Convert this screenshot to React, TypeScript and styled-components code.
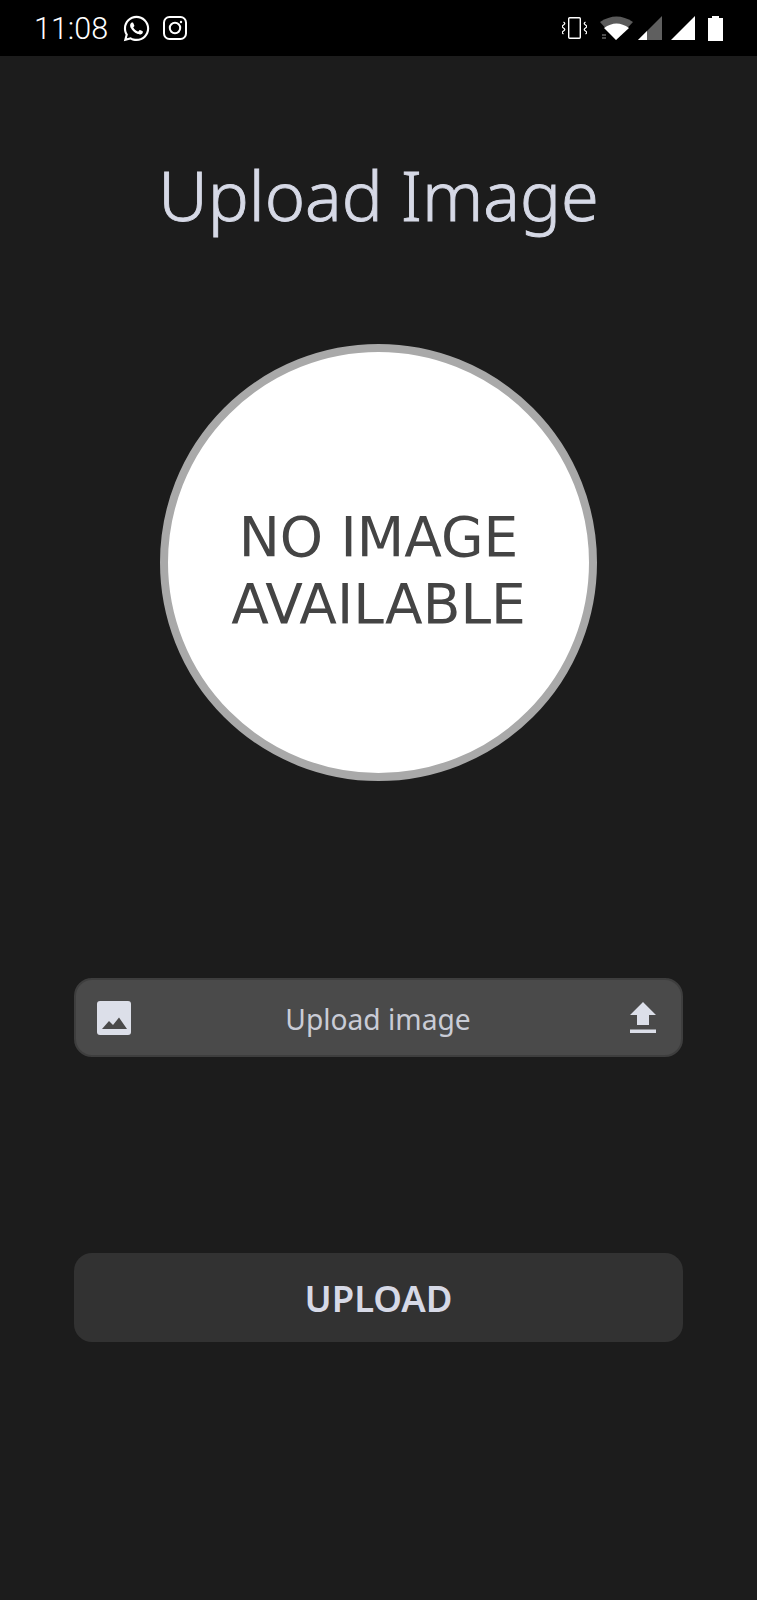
import styled, { createGlobalStyle } from 'styled-components'
import { FaWhatsapp } from 'react-icons/fa'

const GlobalStyle = createGlobalStyle`
  html, body {
    margin: 0;
    padding: 0;
    background: #1c1c1c;
  }
  * {
    box-sizing: border-box;
  }
`

function App() {
  return (
    <Screen>
      <GlobalStyle />
      <StatusBar>
        <StatusLeft>
          <Clock>11:08</Clock>
          <FaWhatsapp size={29} color="#fff" />
          <svg width="24" height="24" viewBox="0 0 24 24" fill="none" stroke="#fff" strokeWidth="2">
            <rect x="1" y="1" width="22" height="22" rx="5.5" />
            <circle cx="12" cy="12" r="5.2" />
            <circle cx="18" cy="6" r="1.2" fill="#fff" stroke="none" />
          </svg>
        </StatusLeft>
        <StatusRight>
          <StatusIcon $gap={0} width="25" height="24" viewBox="0 0 25 24" fill="none" stroke="#fff">
            <rect x="6.7" y="1.7" width="11.6" height="20.6" rx="1" strokeWidth="1.4" />
            <path d="M1.5 6q2.5 1.5 0 3t0 3q2.5 1.5 0 3t0 3M23.5 6q-2.5 1.5 0 3t0 3q-2.5 1.5 0 3t0 3" strokeWidth="1.3" />
          </StatusIcon>
          <StatusIcon $gap={13} width="33" height="24" viewBox="0 0 33 24">
            <path d="M0 6Q16.5 -5 33 6L16 24Z" fill="#5a5a5a" />
            <path d="M4 12Q16.5 3 29 12L16 24Z" fill="#fff" />
            <path d="M2 18h4v2h-4ZM2 21h4v2h-4Z" fill="#4a4a4a" />
          </StatusIcon>
          <StatusIcon $gap={5} width="24" height="24" viewBox="0 0 24 24">
            <path d="M24 0V24H0Z" fill="#5f5f5f" />
            <path d="M9 15V24H0Z" fill="#fff" />
          </StatusIcon>
          <StatusIcon $gap={9} width="24" height="24" viewBox="0 0 24 24">
            <path d="M24 0V24H0Z" fill="#fff" />
          </StatusIcon>
          <StatusIcon $gap={13} width="15" height="25" viewBox="0 0 15 25">
            <path d="M4 0H11V2H15V25H0V2H4Z" fill="#fff" />
          </StatusIcon>
        </StatusRight>
      </StatusBar>
      <Title>Upload Image</Title>
      <Avatar>
        <AvatarText>NO IMAGE<br />AVAILABLE</AvatarText>
      </Avatar>
      <PickerField>
        <svg width="34" height="34" viewBox="0 0 34 34">
          <rect width="34" height="34" rx="3" fill="#dcdfe9" />
          <path d="M5 28L12 20L16 24L22 16.5L30 28Z" fill="#4a4a4a" />
        </svg>
        <PickerLabel>Upload image</PickerLabel>
        <svg width="26" height="31" viewBox="0 0 26 31">
          <path d="M13 0L26 13H19V23H7V13H0Z" fill="#dcdfe9" />
          <rect y="27.5" width="26" height="3.5" fill="#dcdfe9" />
        </svg>
      </PickerField>
      <UploadButton>UPLOAD</UploadButton>
    </Screen>
  )
}

export default App

const Screen = styled.div`
  width: 757px;
  height: 1600px;
  background: #1c1c1c;
  display: flex;
  flex-direction: column;
  align-items: center;
  font-family: 'Noto Sans', sans-serif;
  overflow: hidden;
`

const StatusBar = styled.div`
  width: 100%;
  height: 56px;
  background: #000;
  display: flex;
  align-items: center;
  justify-content: space-between;
  padding: 0 34px 0 34px;
`

const StatusLeft = styled.div`
  display: flex;
  align-items: center;
  gap: 12px;
`

const Clock = styled.span`
  font-family: 'Roboto', sans-serif;
  font-size: 30.5px;
  font-weight: 300;
  color: #fff;
  margin-right: 2px;
`

const StatusRight = styled.div`
  display: flex;
  align-items: center;
`

const StatusIcon = styled.svg<{ $gap: number }>`
  margin-left: ${p => p.$gap}px;
`

const Title = styled.h1`
  margin: 99px 0 0;
  height: 80px;
  font-size: 68.5px;
  line-height: 80px;
  font-weight: 300;
  -webkit-text-stroke: 0.9px #d6d9e6;
  color: #d6d9e6;
  white-space: nowrap;
`

const Avatar = styled.div`
  margin-top: 109px;
  width: 437px;
  height: 437px;
  border-radius: 50%;
  background: #fff;
  border: 8px solid #a9a9a9;
  display: flex;
  align-items: center;
  justify-content: center;
  padding-top: 16px;
`

const AvatarText = styled.div`
  font-family: 'DejaVu Sans', sans-serif;
  font-size: 55px;
  line-height: 67px;
  color: #444;
  text-align: center;
`

const PickerField = styled.div`
  margin-top: 197px;
  width: 609px;
  height: 79px;
  border-radius: 18px;
  background: #4a4a4a;
  border: 2px solid #3e3e3e;
  display: flex;
  align-items: center;
  justify-content: space-between;
  padding: 0 25px 0 21px;
`

const PickerLabel = styled.span`
  font-size: 28.2px;
  font-weight: 400;
  color: #c9ccd6;
  margin: 2px 5px 0 0;
`

const UploadButton = styled.button`
  margin-top: 196px;
  width: 609px;
  height: 89px;
  border: none;
  border-radius: 18px;
  background: #323232;
  color: #d6d9e6;
  font-family: 'Noto Sans', sans-serif;
  font-size: 36.5px;
  font-weight: 600;
`
